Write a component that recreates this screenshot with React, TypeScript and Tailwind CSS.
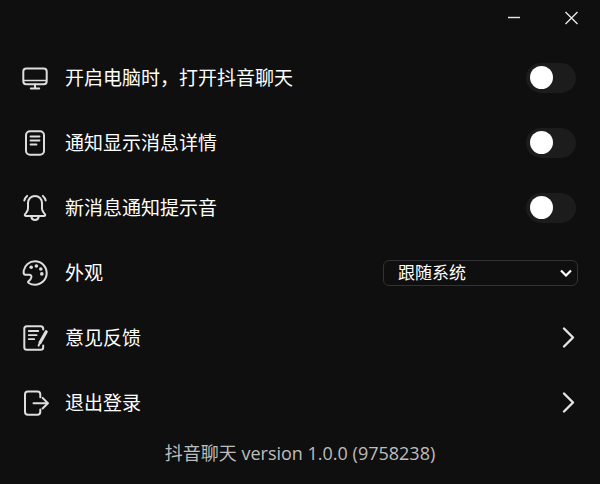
import React, { useState } from "react";

interface RowProps {
  icon: React.ReactNode;
  children: React.ReactNode;
}

const rowClass = "flex h-[65px] w-full items-center gap-[15px] pl-[21px] pr-[22px] text-left";
const labelClass = "flex-1 text-[19px] leading-7";

function Icon({ children }: { children: React.ReactNode }) {
  return (
    <svg
      width="29"
      height="29"
      viewBox="0 0 29 29"
      fill="none"
      stroke="#dedede"
      strokeWidth="2"
      strokeLinecap="round"
      strokeLinejoin="round"
      className="shrink-0"
      aria-hidden="true"
    >
      {children}
    </svg>
  );
}

function MonitorIcon() {
  return (
    <Icon>
      <rect x="2.3" y="5.5" width="23.4" height="15.7" rx="3" />
      <path d="M3 17.5h22" strokeWidth="1.6" />
      <path d="M14 21.5v4M9.8 25.5h8.4" />
    </Icon>
  );
}

function DocumentIcon() {
  return (
    <Icon>
      <rect x="5" y="3.3" width="18" height="23.4" rx="4" />
      <path d="M9.5 8.5h9M9.5 12.5h9M9.5 16.5h6" strokeWidth="1.8" />
    </Icon>
  );
}

function BellIcon() {
  return (
    <Icon>
      <path d="M14 3c-4 0-7 3-7 7v5.600c0 1.600-.7 2.700-1.700 4-.9 1.100-1.600 1.900-1.600 2.500 0 .5.4.8 1 .8h18.600c.6 0 1-.3 1-.8 0-.6-.7-1.400-1.600-2.500-1-1.300-1.700-2.400-1.700-4V10c0-4-3-7-7-7z" />
      <path d="M10.300 23.500c.3 2.300 1.700 3.500 3.700 3.500s3.400-1.200 3.700-3.500" />
      <path d="M3.300 7.500c.5-1.900 1.400-3.400 2.800-4.600M24.700 7.500c-.5-1.900-1.400-3.400-2.800-4.600" />
    </Icon>
  );
}

function PaletteIcon() {
  return (
    <Icon>
      <path d="M2.700 12.600C3.600 7.200 8.300 3.300 14 3.300c6.500 0 11.700 5.200 11.700 11.700S20.500 26.700 14 26.700c-2.300 0-4.500-.6-6.300-1.700-.9-.5-.8-1.300 0-1.900 1.300-.9 2.400-2.200 2.700-3.900.3-1.600-.6-2.500-2.300-2.500-1.500 0-2.800.3-4 .1-1.300-.3-1.700-1.900-1.400-4.200z" />
      <g fill="#dedede" stroke="none">
        <circle cx="10.2" cy="9.2" r="1.8" />
        <circle cx="15.4" cy="8" r="1.8" />
        <circle cx="19.8" cy="11" r="1.8" />
        <circle cx="20.8" cy="15.9" r="1.8" />
      </g>
    </Icon>
  );
}

function FeedbackIcon() {
  return (
    <Icon>
      <path d="M22.200 6.500v-.7c0-1.600-.9-2.500-2.500-2.500H5.800c-1.600 0-2.500.9-2.500 2.500v18.400c0 1.600.9 2.500 2.500 2.500h13.900c1.600 0 2.500-.9 2.500-2.500v-1.700" />
      <path d="M7.800 8h9.500M7.800 12.200h7.800M7.800 16.200h5.400" strokeWidth="1.8" />
      <path d="M25.200 8.800L19 19.800" strokeWidth="3.2" />
      <path d="M18 21.600l-.4 1" />
    </Icon>
  );
}

function LogoutIcon() {
  return (
    <Icon>
      <path d="M19.300 9.300V6.500c0-1.900-1-2.900-2.900-2.900H6.900C5 3.600 4 4.600 4 6.500v17.300c0 1.900 1 2.900 2.900 2.900h9.500c1.900 0 2.900-1 2.900-2.900v-2.300" />
      <path d="M12.500 15.200H27M21.600 9.900l5.300 5.300-5.300 5.300" />
    </Icon>
  );
}

function ChevronRight() {
  return (
    <svg width="16" height="23" viewBox="0 0 16 23" fill="none" className="shrink-0" aria-hidden="true">
      <path
        d="M2 2.500l9 9-9 9"
        stroke="#e4e4e4"
        strokeWidth="2.4"
        strokeLinecap="round"
        strokeLinejoin="round"
      />
    </svg>
  );
}

function ToggleRow({ icon, children }: RowProps) {
  const [on, setOn] = useState(false);

  return (
    <label className={rowClass}>
      {icon}
      <span className={labelClass}>{children}</span>
      <input
        type="checkbox"
        role="switch"
        checked={on}
        onChange={(e) => setOn(e.target.checked)}
        className="mr-0.5 flex h-[30px] w-[50px] shrink-0 cursor-pointer appearance-none items-center rounded-full bg-[#1c1c1c] px-1 transition-colors before:size-[23px] before:rounded-full before:bg-white before:transition-transform before:content-[''] checked:bg-[#fe2c55] checked:before:translate-x-5"
      />
    </label>
  );
}

function LinkRow({ icon, children }: RowProps) {
  return (
    <button type="button" className={`${rowClass} cursor-pointer`}>
      {icon}
      <span className={labelClass}>{children}</span>
      <ChevronRight />
    </button>
  );
}

export default function App() {
  const [theme, setTheme] = useState("system");

  return (
    <div className="flex min-h-screen flex-col bg-[#0f0f0f] font-['Open_Sans','Noto_Sans_CJK_SC',sans-serif] text-white">
      {/* Window controls */}
      <header className="flex h-[45px] items-start justify-end gap-[30px] pr-[14px] pt-1">
        <button type="button" aria-label="最小化" className="flex size-7 items-center justify-center">
          <svg width="14" height="14" viewBox="0 0 14 14" aria-hidden="true">
            <path d="M1 6.500h12" stroke="#e8e8e8" strokeWidth="1.4" />
          </svg>
        </button>
        <button type="button" aria-label="关闭" className="flex size-7 items-center justify-center">
          <svg width="14" height="14" viewBox="0 0 14 14" aria-hidden="true">
            <path d="M.5 1l12 12M12.500 1l-12 12" stroke="#e8e8e8" strokeWidth="1.4" />
          </svg>
        </button>
      </header>

      <main>
        <ToggleRow icon={<MonitorIcon />}>开启电脑时，打开抖音聊天</ToggleRow>
        <ToggleRow icon={<DocumentIcon />}>通知显示消息详情</ToggleRow>
        <ToggleRow icon={<BellIcon />}>新消息通知提示音</ToggleRow>

        <div className={rowClass}>
          <PaletteIcon />
          <label htmlFor="theme" className={labelClass}>
            外观
          </label>
          <div className="relative w-[195px]">
            <select
              id="theme"
              value={theme}
              onChange={(e) => setTheme(e.target.value)}
              className="block h-[26px] w-full appearance-none rounded-md border border-[#333333] bg-[#0f0f0f] pl-[14px] pr-7 text-[17px] leading-6 text-white"
            >
              <option value="system">跟随系统</option>
              <option value="light">浅色</option>
              <option value="dark">深色</option>
            </select>
            <svg
              width="12"
              height="8"
              viewBox="0 0 12 8"
              fill="none"
              className="pointer-events-none absolute right-1.5 top-[9px]"
              aria-hidden="true"
            >
              <path d="M1 1.500l5 5 5-5" stroke="#ffffff" strokeWidth="2.2" />
            </svg>
          </div>
        </div>

        <LinkRow icon={<FeedbackIcon />}>意见反馈</LinkRow>
        <LinkRow icon={<LogoutIcon />}>退出登录</LinkRow>
      </main>

      <footer className="pt-1 text-center text-[18px] leading-7 text-[#bdbdbd]">
        抖音聊天 version 1.0.0 (9758238)
      </footer>
    </div>
  );
}
